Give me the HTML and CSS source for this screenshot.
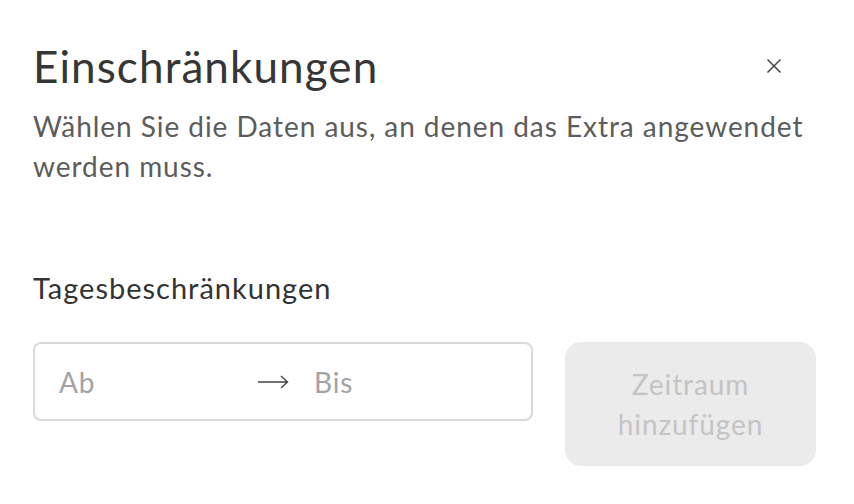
FILE: index.html
```html
<!DOCTYPE html>
<html lang="de">

<head>
  <meta charset="UTF-8">
  <meta name="viewport" content="width=device-width, initial-scale=1">
  <title>Einschränkungen</title>
  <link rel="stylesheet" href="styles.css">
</head>

<body>

  <div class="modal">

    <div class="modal-header">
      <h2 class="title">Einschränkungen</h2>
      <button class="close" aria-label="Schließen">
        <svg width="16" height="16" viewBox="0 0 16 16">
          <path d="M1.5 1.5 L14.5 14.5 M14.5 1.5 L1.5 14.5" stroke="#444" stroke-width="1.5" fill="none" />
        </svg>
      </button>
    </div>

    <p class="intro">Wählen Sie die Daten aus, an denen das Extra angewendet werden muss.</p>

    <h3 class="label">Tagesbeschränkungen</h3>

    <div class="row">
      <div class="range">
        <span class="range-input">Ab</span>
        <span class="range-arrow">
          <svg width="31" height="16" viewBox="0 0 31 16">
            <path d="M0 8 H29.5 M23 2 L29.5 8 L23 14" stroke="#444" stroke-width="1.4" fill="none" />
          </svg>
        </span>
        <span class="range-input">Bis</span>
      </div>
      <button class="add" disabled>Zeitraum hinzufügen</button>
    </div>

  </div>

</body>

</html>
```

FILE: styles.css
```css
body {
  margin: 0;
  background: #fff;
  color: #333;
  font-family: 'Lato', 'Open Sans', sans-serif;
}

.modal {
  padding: 34px 38px 0 33px;
}

.modal-header {
  display: flex;
  justify-content: space-between;
  align-items: center;
}

.title {
  margin: 0;
  font-size: 44px;
  font-weight: 400;
  line-height: 64px;
  letter-spacing: 1.1px;
  color: #363636;
}

.close {
  -webkit-appearance: none;
  background: none;
  border: none;
  padding: 0;
  margin-right: 34px;
  width: 16px;
  height: 16px;
  cursor: pointer;
}

.intro {
  margin: 8px 0 0 0;
  font-size: 28px;
  line-height: 40px;
  letter-spacing: 0.95px;
  color: #5c5c5c;
}

.label {
  margin: 82px 0 0 0;
  font-size: 29px;
  font-weight: 400;
  line-height: 40px;
  letter-spacing: 1px;
  color: #333;
}

.row {
  display: flex;
  gap: 32px;
  margin-top: 34px;
}

.range {
  flex-shrink: 0;
  width: 500px;
  height: 79px;
  box-sizing: border-box;
  border: 2px solid #dadada;
  border-radius: 8px;
  display: flex;
  align-items: center;
  padding: 0 24px;
  font-size: 28px;
  letter-spacing: 0.9px;
}

.range-input {
  color: #a3a3a3;
}

.range-input:first-child {
  width: 199px;
}

.range-arrow {
  width: 56px;
  display: flex;
  align-items: center;
}

.add {
  -webkit-appearance: none;
  flex-shrink: 0;
  width: 251px;
  height: 124px;
  border: none;
  border-radius: 16px;
  background: #ebebeb;
  color: #c4c4c4;
  font-family: inherit;
  font-size: 28px;
  line-height: 40px;
  letter-spacing: 0.9px;
  padding: 0 40px;
}
```
